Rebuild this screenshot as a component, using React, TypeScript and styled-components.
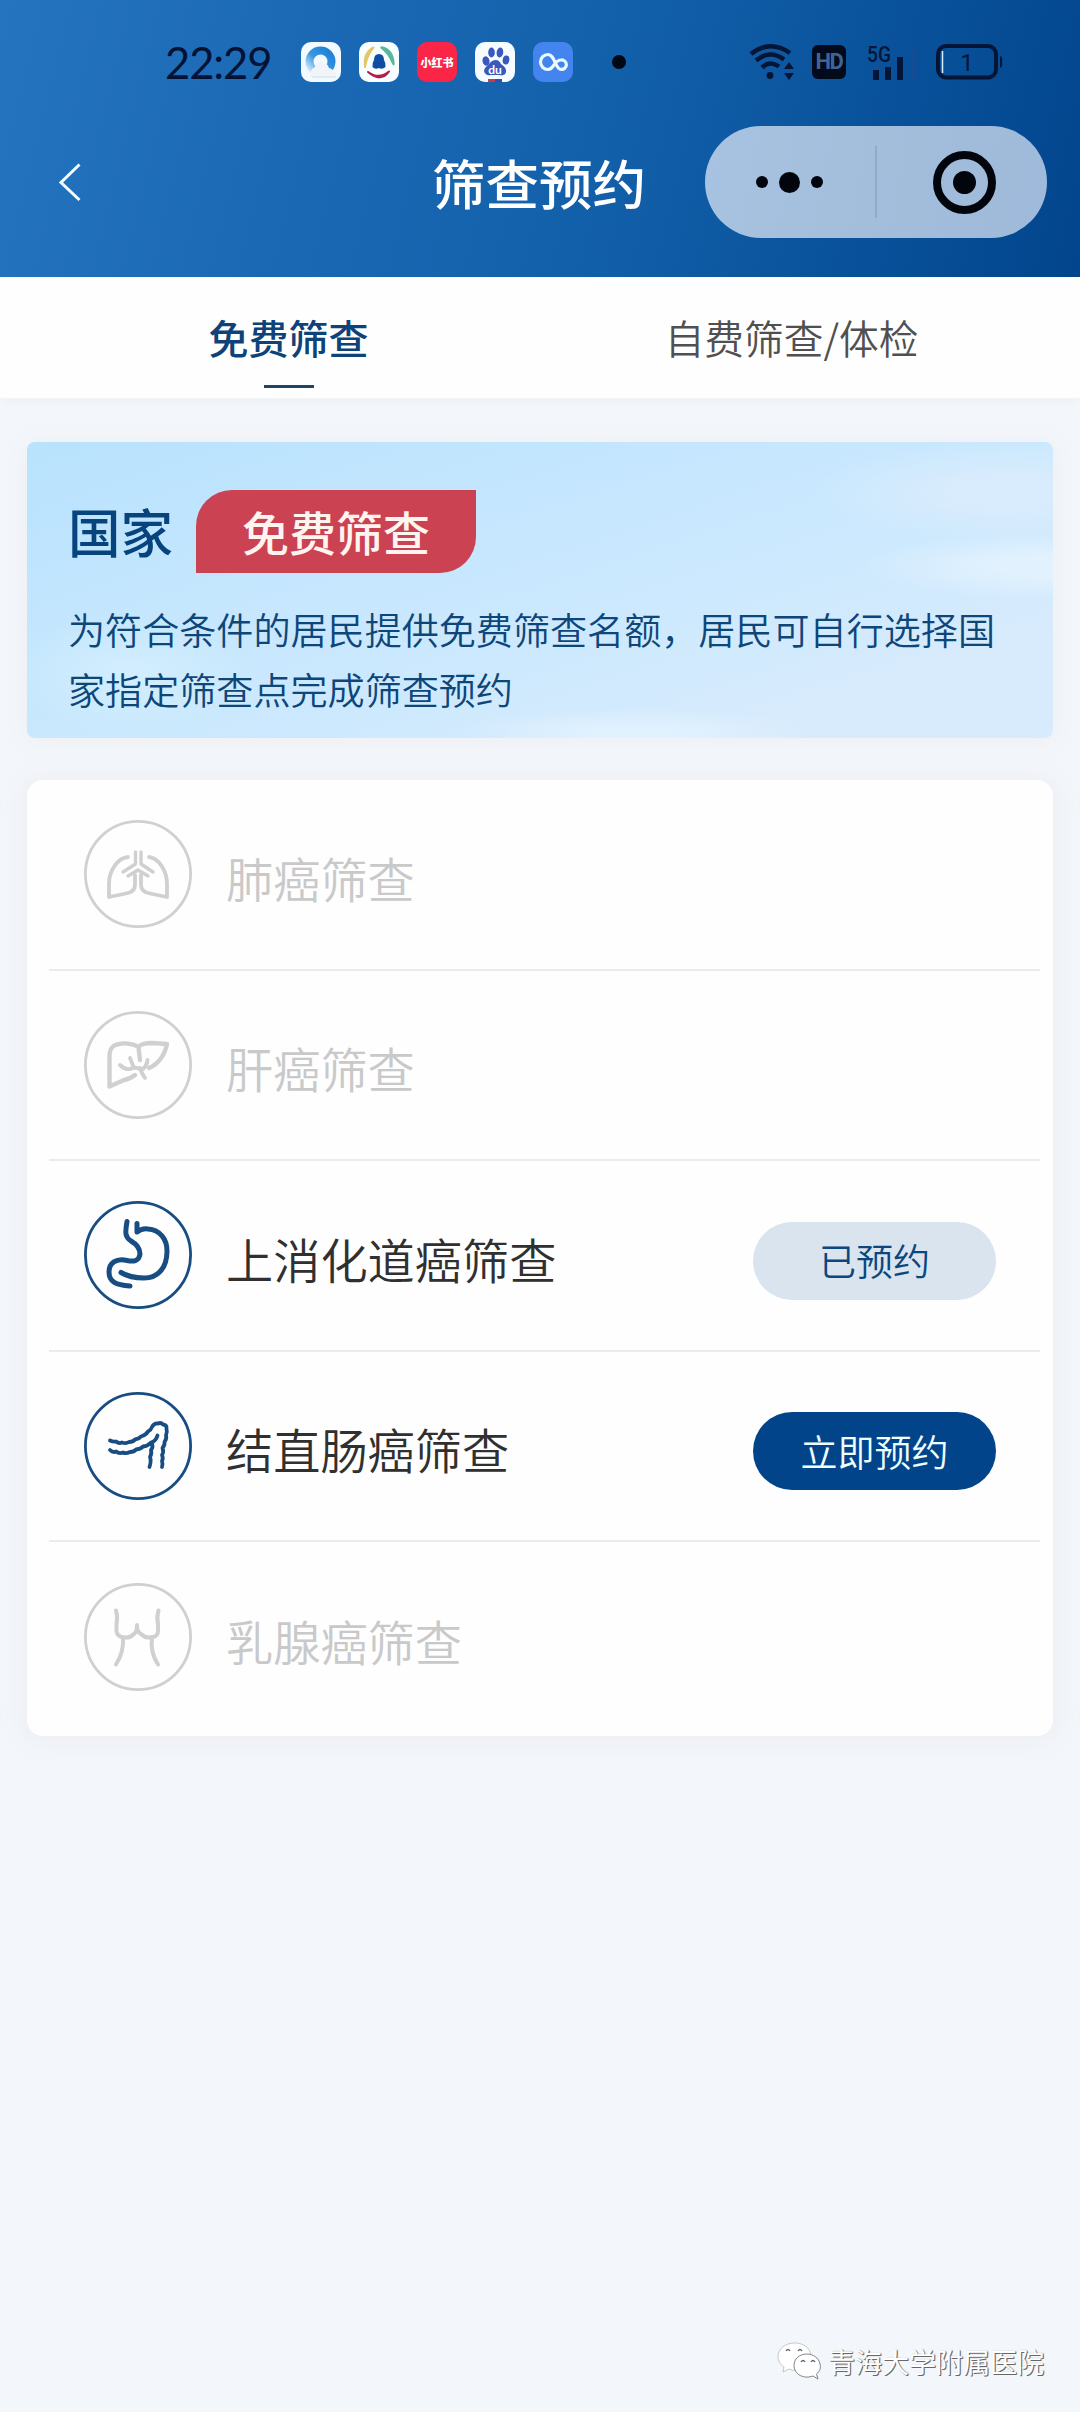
import React from "react";
import styled, { createGlobalStyle } from "styled-components";

const GlobalStyle = createGlobalStyle`
  * { box-sizing: border-box; }
  body {
    margin: 0;
    background: #f3f7fb;
    font-family: "Noto Sans CJK SC", sans-serif;
  }
`;

const Page = styled.div`
  display: flex;
  flex-direction: column;
  width: 1080px;
  height: 2412px;
  background: #f3f7fb;
  overflow: hidden;
`;

const Header = styled.header`
  height: 277px;
  flex: none;
  background: linear-gradient(104deg, #2574bf 0%, #1b69b5 28%, #1360aa 55%, #0a549d 76%, #044a92 92%, #03458c 100%);
`;

const StatusBar = styled.div`
  display: flex;
  align-items: center;
  height: 124px;
  padding: 0 77px 0 165px;
`;

const Clock = styled.time`
  width: 136px;
  font: 400 43.5px/50px Lato, sans-serif;
  letter-spacing: -1.1px;
  color: #041236;
  white-space: nowrap;
`;

const AppIcons = styled.div`
  display: flex;
  gap: 18px;
  svg { display: block; }
`;

const AppTile = styled.div<{ $bg: string }>`
  display: flex;
  align-items: center;
  justify-content: center;
  width: 40px;
  height: 40px;
  border-radius: 10px;
  overflow: hidden;
  background: ${(p) => p.$bg};
`;

const RedNote = styled.span`
  font-size: 11px;
  font-weight: 900;
  line-height: 14px;
  color: #fff;
  white-space: nowrap;
`;

const NotificationDot = styled.i`
  width: 14px;
  height: 14px;
  margin-left: 39px;
  border-radius: 50%;
  background: #010713;
`;

const SystemIcons = styled.div`
  display: flex;
  align-items: center;
  margin-left: auto;
  svg { display: block; overflow: visible; }
`;

const HdBadge = styled.span`
  display: flex;
  align-items: center;
  justify-content: center;
  width: 34px;
  height: 34px;
  margin: 0 21px 0 17px;
  border-radius: 6px;
  background: #020a1c;
  color: #3d6497;
  font: 700 22px/34px Roboto, sans-serif;
  letter-spacing: -1.5px;
`;

const NavBar = styled.div`
  display: grid;
  grid-template-columns: 340px 1fr 342px;
  align-items: center;
  height: 116px;
  padding: 0 33px 0 58px;
`;

const BackButton = styled.button`
  width: 60px;
  height: 60px;
  padding: 0;
  border: 0;
  background: none;
  svg { display: block; }
`;

const Title = styled.h1`
  margin: 0 0 1px;
  padding-left: 34px;
  font-size: 53.5px;
  font-weight: 500;
  line-height: 70px;
  color: #fff;
  white-space: nowrap;
`;

const Capsule = styled.div`
  display: grid;
  grid-template-columns: 170px 2px 170px;
  align-items: center;
  height: 112px;
  border-radius: 56px;
  background: linear-gradient(100deg, #a7c3e1, #a3bedb 50%, #9fbada);
`;

const Dots = styled.div`
  display: flex;
  align-items: center;
  justify-content: center;
  gap: 11px;
  padding-right: 2px;
`;

const Dot = styled.i<{ $size: number }>`
  width: ${(p) => p.$size}px;
  height: ${(p) => p.$size}px;
  border-radius: 50%;
  background: #02060c;
`;

const CapsuleDivider = styled.i`
  height: 72px;
  background: #8eabc8;
`;

const CloseRing = styled.div`
  display: flex;
  align-items: center;
  justify-content: center;
  width: 63px;
  height: 63px;
  margin-left: 56px;
  border: 8px solid #02060c;
  border-radius: 50%;
`;

const Tabs = styled.nav`
  display: grid;
  grid-template-columns: 1fr 1fr;
  flex: none;
  height: 122px;
  padding: 0 37px;
  background: #fefefe;
  border-bottom: 1px solid #f3f4f6;
  box-shadow: 0 6px 8px -4px #eceff3;
`;

const Tab = styled.a<{ $active?: boolean }>`
  display: flex;
  flex-direction: column;
  align-items: center;
  padding-top: 30px;
  font-size: ${(p) => (p.$active ? 40 : 39.7)}px;
  line-height: 60px;
  font-weight: ${(p) => (p.$active ? 500 : 350)};
  color: ${(p) => (p.$active ? "#0d4379" : "#505050")};
  &::after {
    content: "";
    width: 50px;
    height: 3px;
    margin-top: 18px;
    background: ${(p) => (p.$active ? "#1b4669" : "transparent")};
  }
`;

const Content = styled.main`
  display: flex;
  flex-direction: column;
  gap: 42px;
  padding: 43px 27px 0;
`;

const Banner = styled.section`
  height: 296px;
  padding: 48px 46px 0 41px;
  border-radius: 8px;
  background:
    radial-gradient(ellipse 190px 34px at 100% 42%, rgba(226, 242, 254, .95) 30%, transparent 100%),
    radial-gradient(ellipse 200px 50px at 96% 17%, rgba(218, 236, 252, .9) 30%, transparent 100%),
    radial-gradient(ellipse 180px 24px at 59% 98%, rgba(228, 243, 255, .8) 20%, transparent 100%),
    radial-gradient(ellipse 120px 60px at 10% 78%, rgba(214, 240, 255, .7) 10%, transparent 100%),
    linear-gradient(162deg, #b8e2fd 0%, #c3e6fe 30%, #cde9fe 60%, #d8ebfc 85%);
  box-shadow: 0 2px 24px 4px #eeeff3;
`;

const BannerHead = styled.div`
  display: flex;
  height: 83px;
`;

const Region = styled.h2`
  width: 128px;
  margin: 0;
  font-size: 52.5px;
  font-weight: 500;
  line-height: 80px;
  color: #07437d;
`;

const FreeBadge = styled.span`
  width: 280px;
  height: 83px;
  border-radius: 36px 0 36px 0;
  background: #cb4353;
  color: #fff4ef;
  font-size: 47px;
  font-weight: 500;
  line-height: 81px;
  text-align: center;
`;

const BannerText = styled.p`
  margin: 27px 0 0;
  font-size: 37.1px;
  font-weight: 350;
  line-height: 59.5px;
  color: #0d4679;
`;

const ListCard = styled.ul`
  height: 956px;
  margin: 0;
  padding: 0 13px 0 22px;
  list-style: none;
  border-radius: 16px;
  background: #fefefe;
  box-shadow: 0 2px 26px 8px #eeeff4;
`;

const Row = styled.li<{ $tone: string }>`
  display: flex;
  align-items: center;
  height: 190.5px;
  padding: 0 44px 0 35px;
  color: ${(p) => p.$tone};
  &:not(:last-child) { border-bottom: 2px solid #ebebed; }
`;

const RowLabel = styled.span<{ $enabled: boolean }>`
  flex: 1;
  padding: 7px 0 0 34px;
  font-size: 47.2px;
  font-weight: 350;
  line-height: 64px;
  color: ${(p) => (p.$enabled ? "#303030" : "#c9c9c9")};
`;

const BookButton = styled.button<{ $primary: boolean }>`
  width: 243px;
  height: 78px;
  margin-top: 11px;
  padding: 0 0 1px;
  border: 0;
  border-radius: 39px;
  font: 350 37px/76px "Noto Sans CJK SC", sans-serif;
  background: ${(p) => (p.$primary ? "#024489" : "#dae4ef")};
  color: ${(p) => (p.$primary ? "#f0ffff" : "#0a477f")};
`;

const Watermark = styled.footer`
  display: flex;
  align-items: center;
  justify-content: flex-end;
  gap: 6px;
  height: 60px;
  margin-top: auto;
  margin-bottom: 20px;
  padding-right: 36px;
  color: #fff;
  font-size: 27px;
  line-height: 40px;
  text-shadow: 1px 1px 0 #66686c, 1px 0 1px #909296;
`;

const Stroke = ({ children, width = 4.2 }: { children: React.ReactNode; width?: number }) => (
  <svg width="108" height="108" viewBox="0 0 108 108" fill="none" stroke="currentColor"
    strokeWidth={width} strokeLinecap="round" strokeLinejoin="round">
    <circle cx="54" cy="54" r="52.6" strokeWidth="2.8" />
    {children}
  </svg>
);

const LungIcon = () => (
  <Stroke width={3.8}>
    <path d="M44 37C34 38 25 50 25 64V77L42 73.5Q51 72 51 65V55" />
    <path d="M65 37C74 38 83 50 83 64V77L66 73.5Q57 72 57 65V55" />
    <path d="M51.5 32V44L39 52M57 32V44L69 52M44 56L54 50L64 56" strokeWidth="3.4" />
  </Stroke>
);

const LiverIcon = () => (
  <Stroke width={4.4}>
    <path d="M51 64Q46 68 40 69L25.5 75.5V48C25 38 28 34 35 33C42 31.5 50 33 54.5 36C57 32.5 62 32 68 32L83 33Q79 51 65 57M54.5 36L56 49" />
    <path d="M36 54Q41 59 46 58Q53 55 57 59Q63 56 63.5 49M46 47L50 57M56 57Q57 61 61 67" strokeWidth="3.9" />
  </Stroke>
);

const StomachIcon = () => (
  <Stroke width={5}>
    <path d="M43 20.5C41 32 41 36 47 40C54 44 56 49 56 53C55 60 50 61 43 59.5C32 57 25 62 25 71C25 81 32 84 46 85" />
    <path d="M53 22.5V31Q58 27 64 28C76 29 83 38 83 50C83 68 73 77 60 77Q46 77 37 71.5" />
  </Stroke>
);

const ColonIcon = () => (
  <Stroke width={3.8}>
    <path d="M26 48.500Q29 50 32 49.500Q35 52 38 50.500Q42 52 45 50Q49 50 51 47.500Q55 47 57 44.500Q62 43 64 39.500Q67 38 68 35Q70 31 74 31.500Q77 30 79 32.500Q83 33 82.500 37Q83.500 40 82 43Q83 47 80.500 50Q81 53 78.500 56Q80 60 78 63Q79.500 66 78 69Q79 72 78 75" />
    <path d="M26 58Q29 61 32 59.500Q35 62 39 60.500Q42 62 46 60Q50 60 52 57.500Q57 57 59 54.500Q64 54 67 50.500Q72 49 73.500 43.500M68 52Q69.500 55 67 58Q68 62 66 65Q67.500 69 65.500 75" />
  </Stroke>
);

const BreastIcon = () => (
  <Stroke width={4}>
    <path d="M32 27.500Q34 34 32.500 41V48Q33 53 38 54Q45 56 50 51Q53 49 53 42Q53 49 57 51Q62 56 69 54Q74 53 74 48V41Q72.500 34 74.500 27.500" />
    <path d="M39 55Q40 69 32 81.500M68 55Q66 69 74 81.500" />
  </Stroke>
);

const GREY = "#d0d0d0";
const NAVY = "#174d83";

const screenings = [
  { name: "肺癌筛查", Icon: LungIcon, enabled: false },
  { name: "肝癌筛查", Icon: LiverIcon, enabled: false },
  { name: "上消化道癌筛查", Icon: StomachIcon, enabled: true, action: "已预约" },
  { name: "结直肠癌筛查", Icon: ColonIcon, enabled: true, action: "立即预约" },
  { name: "乳腺癌筛查", Icon: BreastIcon, enabled: false },
];

const BrowserLogo = () => (
  <svg width="40" height="40" viewBox="0 0 40 40">
    <defs>
      <linearGradient id="ring" x1="1" y1="0" x2="0" y2="1">
        <stop offset="0" stopColor="#1b7fd8" />
        <stop offset=".55" stopColor="#3798e0" />
        <stop offset="1" stopColor="#dceefb" />
      </linearGradient>
    </defs>
    <circle cx="19.500" cy="19.500" r="11" fill="none" stroke="url(#ring)" strokeWidth="8" />
    <path d="M9 35Q8 28 14 25Q17 17 23 21Q27 22 28 26Q34 27 35 35Z" fill="#f1f4f8" />
    <path d="M11 35H35" stroke="#d5dde7" />
  </svg>
);

const AssistantLogo = () => (
  <svg width="40" height="40" viewBox="0 0 40 40" fill="none">
    <path d="M14.500 5.500Q4 11 6 25Q8 13 14.500 5.500Z" fill="#e3c868" stroke="#e3c868" strokeWidth="2" strokeLinejoin="round" />
    <path d="M22.500 5.500Q34 8 34.500 22Q30 11 22.500 5.500Z" fill="#5bb79b" stroke="#5bb79b" strokeWidth="2.400" strokeLinejoin="round" />
    <path d="M9 30Q20 38 30 29.500Q22 41 9 30Z" fill="#b31c4d" stroke="#b31c4d" strokeWidth="2" strokeLinejoin="round" />
    <path d="M15 18Q15 12 20 12Q25 12 25 18Q27 21 26.500 25Q23 28 20 26Q16 28 13.500 25Q13 21 15 18Z" fill="#0f4da4" />
  </svg>
);

const PawLogo = () => (
  <svg width="40" height="40" viewBox="0 0 40 40">
    <g fill="#3b58bd">
      <ellipse cx="11" cy="19" rx="3.500" ry="4.700" transform="rotate(-12 11 19)" />
      <ellipse cx="16.500" cy="10.500" rx="3.300" ry="5" />
      <ellipse cx="25" cy="10.500" rx="3.300" ry="5" transform="rotate(8 25 10)" />
      <ellipse cx="31" cy="18" rx="3.300" ry="4.500" transform="rotate(10 31 18)" />
      <path d="M21 18Q24 18 26 22Q32 26 31 30Q30 34 25 33H16Q10 34 9 29Q9 26 14 22Q17 18 21 18Z" />
    </g>
    <text x="20" y="31.500" textAnchor="middle" fontFamily="Lato" fontWeight="700" fontSize="12" fill="#fff">du</text>
    <path d="M13 37H20V40H13Z" fill="#c93c46" />
    <path d="M20 37H27V40H20Z" fill="#334fae" />
  </svg>
);

const CloudLogo = () => (
  <svg width="40" height="40" viewBox="0 0 40 40" fill="none" stroke="#e9fbff" strokeWidth="3.200">
    <path d="M15 12.500A7.500 7.500 0 1 0 15 27.500C21 27.500 21 18 28 18A4.700 4.700 0 1 1 28 27.300C22 27.300 22 12.500 15 12.500Z" />
  </svg>
);

const WifiIcon = () => (
  <svg width="45" height="36" viewBox="0 0 45 36" fill="none" stroke="#051536" strokeWidth="4.500">
    <path d="M1 10Q20 -5 40 9M6 16.500Q20 5 34 15.500M12 23.500Q20 16 29 22.500" />
    <circle cx="20" cy="31.500" r="3.400" fill="#051536" stroke="none" />
    <path d="M39 18L44 25H34ZM39 36L34 29H44Z" fill="#051536" stroke="none" />
  </svg>
);

const SignalIcon = () => (
  <svg width="50" height="37" viewBox="0 0 50 37">
    <text x="0" y="18" fontFamily="Roboto" fontSize="22" fontWeight="500" fill="#051536" textLength="24" lengthAdjust="spacingAndGlyphs">5G</text>
    <path d="M9 26V36M21 23V36M33 13V36" stroke="#051536" strokeWidth="6" />
    <path d="M46 5V36" stroke="#164b95" strokeWidth="4" />
  </svg>
);

const BatteryIcon = () => (
  <svg width="67" height="36" viewBox="0 0 67 36" fill="none">
    <rect x="2" y="2" width="58" height="31.500" rx="8" stroke="#051536" strokeWidth="4" />
    <path d="M64 12Q67 13 66 18Q67 23 64 24Z" fill="#051536" />
    <path d="M6.500 7V29" stroke="#d9edff" strokeWidth="1.500" />
    <text x="31" y="26.500" textAnchor="middle" fontFamily="Roboto" fontWeight="400" fontSize="24" fill="#051536">1</text>
  </svg>
);

const WechatIcon = () => (
  <svg width="45" height="40" viewBox="0 0 45 40" fill="#fff" stroke="#8c9095" strokeWidth=".9">
    <path d="M18 1C8 1 1 7 1 14.500C1 19 3 22 7 25L6 30L12 27Q16 29 20 28C33 27 36 19 33 10C31 4 24 1 18 1Z" strokeOpacity=".55" />
    <path d="M30 12C22 12 17 17 17 23.500C17 31 24 36 32 35L36 34L41 37L39.500 32C43 29 44 26 43 22C42 16 36 12 30 12Z" stroke="#74777c" />
    <path d="M9 9Q11 6 13 9M21 9Q23 6 25 9M24 20Q26 17 28 20M34 20Q36 17 38 20" fill="none" stroke="#606369" strokeWidth="1.300" />
  </svg>
);

const SignalGap = styled.i`
  width: 19px;
`;

export default function App() {
  return (
    <>
      <GlobalStyle />
      <Page>
        <Header>
          <StatusBar>
            <Clock>22:29</Clock>
            <AppIcons>
              <AppTile $bg="#f2faff"><BrowserLogo /></AppTile>
              <AppTile $bg="#f8feff"><AssistantLogo /></AppTile>
              <AppTile $bg="#fb2547"><RedNote>小红书</RedNote></AppTile>
              <AppTile $bg="#f5fcff"><PawLogo /></AppTile>
              <AppTile $bg="#4384ef"><CloudLogo /></AppTile>
            </AppIcons>
            <NotificationDot />
            <SystemIcons>
              <WifiIcon />
              <HdBadge>HD</HdBadge>
              <SignalIcon />
              <SignalGap />
              <BatteryIcon />
            </SystemIcons>
          </StatusBar>
          <NavBar>
            <BackButton aria-label="返回">
              <svg width="60" height="60" viewBox="0 0 60 60" fill="none" stroke="#f3fbff" strokeWidth="3">
                <path d="M21.500 12.500L3 30.500L21.500 48" />
              </svg>
            </BackButton>
            <Title>筛查预约</Title>
            <Capsule>
              <Dots>
                <Dot $size={12} />
                <Dot $size={21} />
                <Dot $size={12} />
              </Dots>
              <CapsuleDivider />
              <CloseRing><Dot $size={23} /></CloseRing>
            </Capsule>
          </NavBar>
        </Header>
        <Tabs>
          <Tab $active>免费筛查</Tab>
          <Tab>自费筛查/体检</Tab>
        </Tabs>
        <Content>
          <Banner>
            <BannerHead>
              <Region>国家</Region>
              <FreeBadge>免费筛查</FreeBadge>
            </BannerHead>
            <BannerText>为符合条件的居民提供免费筛查名额，居民可自行选择国家指定筛查点完成筛查预约</BannerText>
          </Banner>
          <ListCard>
            {screenings.map(({ name, Icon, enabled, action }) => (
              <Row key={name} $tone={enabled ? NAVY : GREY}>
                <Icon />
                <RowLabel $enabled={enabled}>{name}</RowLabel>
                {action && <BookButton $primary={action === "立即预约"}>{action}</BookButton>}
              </Row>
            ))}
          </ListCard>
        </Content>
        <Watermark>
          <WechatIcon />
          <span>青海大学附属医院</span>
        </Watermark>
      </Page>
    </>
  );
}
